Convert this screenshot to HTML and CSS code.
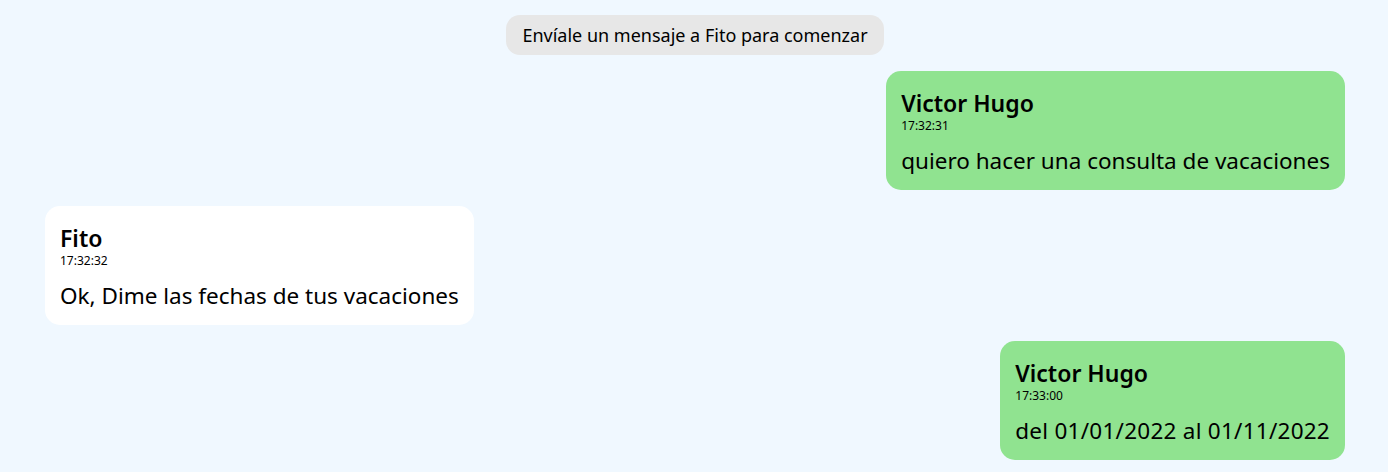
FILE: index.html
```html
<!DOCTYPE html>
<html lang="es">
<head>
<meta charset="utf-8">
<title>Chat</title>
<link rel="stylesheet" href="styles.css">
</head>
<body>
<div class="chat">
  <div class="notice">Envíale un mensaje a Fito para comenzar</div>
  <div class="bubble mine">
    <div class="name">Victor Hugo</div>
    <div class="time">17:32:31</div>
    <div class="text">quiero hacer una consulta de vacaciones</div>
  </div>
  <div class="bubble theirs">
    <div class="name">Fito</div>
    <div class="time">17:32:32</div>
    <div class="text">Ok, Dime las fechas de tus vacaciones</div>
  </div>
  <div class="bubble mine">
    <div class="name">Victor Hugo</div>
    <div class="time">17:33:00</div>
    <div class="text">del 01/01/2022 al 01/11/2022</div>
  </div>
</div>
</body>
</html>
```
FILE: styles.css
```css
html, body {
  margin: 0;
  padding: 0;
  background: #f0f8ff;
}
body {
  font-family: "Noto Sans", "Open Sans", sans-serif;
  color: #000;
}
.chat {
  display: flex;
  flex-direction: column;
  padding: 15px 43px 13px 45px;
  gap: 16px;
}
.notice {
  align-self: center;
  background: #e7e7e7;
  border-radius: 14px;
  height: 40px;
  box-sizing: border-box;
  padding: 0 16px;
  display: flex;
  align-items: center;
  font-size: 18px;
}
.bubble {
  border-radius: 15px;
  padding: 17px 15px 14px 15px;
}
.mine {
  align-self: flex-end;
  background: #90e390;
}
.theirs {
  align-self: flex-start;
  background: #ffffff;
}
.name {
  font-size: 23px;
  font-weight: 600;
  line-height: 30px;
}
.time {
  font-size: 12px;
  line-height: 16px;
}
.text {
  font-size: 22.5px;
  line-height: 30px;
  margin-top: 12px;
}
.mine:last-child .text {
  letter-spacing: 0.25px;
}
```
